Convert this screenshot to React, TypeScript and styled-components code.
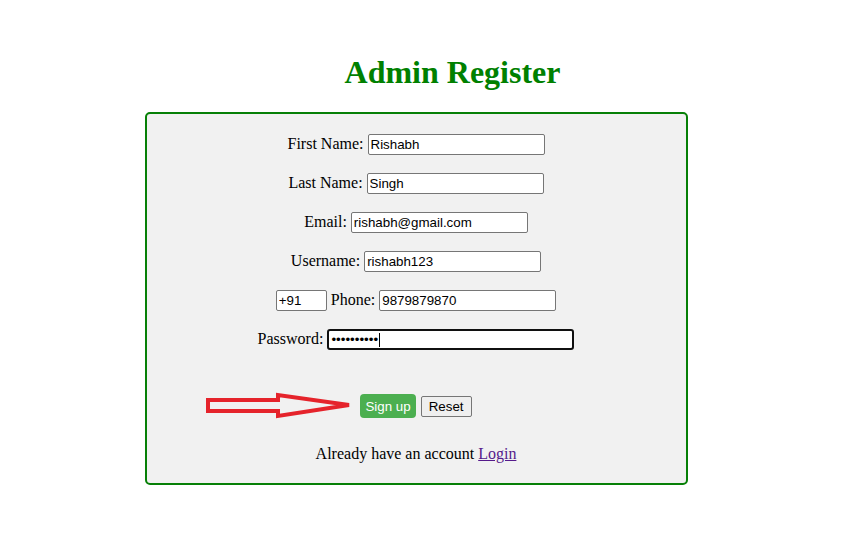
import React from "react";
import styled, { createGlobalStyle } from "styled-components";

const GlobalStyle = createGlobalStyle`
  html, body {
    margin: 0;
    padding: 0;
    background: #ffffff;
  }
  body {
    font-family: "Liberation Serif", "Times New Roman", serif;
    color: #000;
  }
`;

const Page = styled.div`
  padding-top: 54px;
  width: 855px;
`;

const Title = styled.h1`
  margin: 0 0 21px 0;
  padding-left: 50px;
  text-align: center;
  color: #008000;
  font-family: "Liberation Serif", "Times New Roman", serif;
  font-weight: bold;
  font-size: 32px;
`;

const Card = styled.form`
  margin-left: 145px;
  width: 543px;
  box-sizing: border-box;
  border: 2px solid #078007;
  border-radius: 5px;
  background: #f1f1f1;
  padding: 20px 1px 20px 0;
  display: flex;
  flex-direction: column;
  align-items: center;
`;

const Rows = styled.div`
  display: flex;
  flex-direction: column;
  align-items: center;
  gap: 18px;
  width: 100%;
`;

const Row = styled.div`
  display: flex;
  align-items: center;
  justify-content: center;
  gap: 4px;
  height: 21px;
`;

const Label = styled.label`
  font-size: 16px;
  line-height: 18px;
  white-space: nowrap;
  margin-top: -1px;
`;

const Input = styled.input<{ $w?: number }>`
  box-sizing: border-box;
  width: ${(p) => p.$w ?? 177}px;
  height: 21px;
  padding: 1px 2px;
  border: 1px solid #767676;
  border-radius: 2px;
  background: #fff;
  font-family: "Liberation Sans", Arial, sans-serif;
  font-size: 13.33px;
  color: #000;
  outline: none;
`;

const FieldWrap = styled.span`
  position: relative;
  display: inline-flex;
`;

const FocusedInput = styled(Input)`
  border: 2px solid #101010;
  border-radius: 3px;
  padding: 0 2px;
`;

const Caret = styled.span`
  position: absolute;
  left: 52px;
  top: 4px;
  width: 1px;
  height: 14px;
  background: #000;
`;

const ButtonRow = styled.div`
  position: relative;
  width: 100%;
  margin-top: 44px;
  height: 24px;
  display: flex;
  align-items: center;
  justify-content: center;
  gap: 5px;
`;

const SignUp = styled.button`
  box-sizing: border-box;
  height: 24px;
  padding: 0 5px;
  border: none;
  border-radius: 4px;
  background: #4caf50;
  color: #fff;
  font-family: "Liberation Sans", Arial, sans-serif;
  font-size: 13.33px;
`;

const Reset = styled.button`
  box-sizing: border-box;
  height: 21px;
  padding: 0 7px;
  border: 1px solid #767676;
  border-radius: 2px;
  background: #efefef;
  color: #000;
  font-family: "Liberation Sans", Arial, sans-serif;
  font-size: 13.33px;
`;

const Arrow = styled.svg`
  position: absolute;
  left: 56px;
  top: -4px;
`;

const Footer = styled.p`
  margin: 27px 0 0;
  font-size: 16px;
  line-height: 18px;
  text-align: center;
`;

const LoginLink = styled.a`
  color: #551a8b;
  text-decoration: underline;
`;

export default function App() {
  return (
    <>
      <GlobalStyle />
      <Page>
        <Title>Admin Register</Title>
        <Card onSubmit={(e) => e.preventDefault()}>
          <Rows>
            <Row>
              <Label>First Name:</Label>
              <Input readOnly value="Rishabh" />
            </Row>
            <Row>
              <Label>Last Name:</Label>
              <Input readOnly value="Singh" />
            </Row>
            <Row>
              <Label>Email:</Label>
              <Input readOnly value="rishabh@gmail.com" />
            </Row>
            <Row>
              <Label>Username:</Label>
              <Input readOnly value="rishabh123" />
            </Row>
            <Row>
              <Input readOnly value="+91" $w={51} />
              <Label>Phone:</Label>
              <Input readOnly value="9879879870" />
            </Row>
            <Row>
              <Label>Password:</Label>
              <FieldWrap>
                <FocusedInput type="password" readOnly value="rishabh123" $w={247} />
                <Caret />
              </FieldWrap>
            </Row>
          </Rows>
          <ButtonRow>
            <Arrow width="152" height="32" viewBox="0 0 152 32">
              <polygon
                points="5,10 75,10 75,5 146,15 75,26 75,21 5,21"
                fill="none"
                stroke="#e5232b"
                strokeWidth="4"
                strokeLinejoin="miter"
              />
            </Arrow>
            <SignUp type="submit">Sign up</SignUp>
            <Reset type="reset">Reset</Reset>
          </ButtonRow>
          <Footer>
            Already have an account <LoginLink href="#">Login</LoginLink>
          </Footer>
        </Card>
      </Page>
    </>
  );
}
